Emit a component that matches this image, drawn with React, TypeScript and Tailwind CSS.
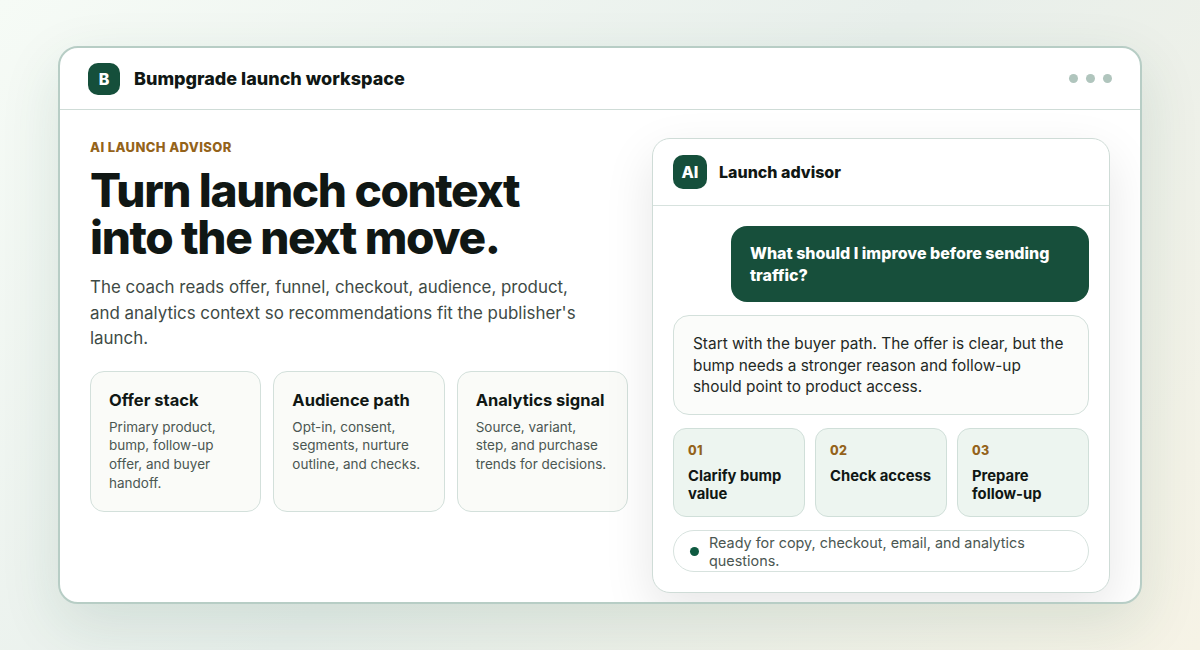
const features = [
  { title: "Offer stack", text: "Primary product, bump, follow-up offer, and buyer handoff." },
  { title: "Audience path", text: "Opt-in, consent, segments, nurture outline, and checks." },
  { title: "Analytics signal", text: "Source, variant, step, and purchase trends for decisions." },
];

const steps = [
  { num: "01", title: "Clarify bump value" },
  { num: "02", title: "Check access" },
  { num: "03", title: "Prepare follow-up" },
];

const App = () => {
  return (
    <div className="h-[650px] w-full overflow-hidden bg-[linear-gradient(135deg,#f6fbf6_0%,#e8efeb_50%,#f6f3e6_100%)] px-[58px] pt-[46px] font-['Inter',sans-serif] text-[#101714]">
      <div className="flex h-[558px] w-[1084px] flex-col overflow-hidden rounded-[20px] border-2 border-[#b7cdc5] bg-white shadow-[0_20px_60px_rgba(23,79,59,0.12)]">
        <header className="flex h-[62px] shrink-0 items-center justify-between border-b border-[#cfdcd7] px-7">
          <div className="flex items-center gap-[14px]">
            <div className="flex h-8 w-8 items-center justify-center rounded-[10px] bg-[#154f3b] text-[16px] font-extrabold text-white">B</div>
            <h2 className="text-[18px] font-extrabold">Bumpgrade launch workspace</h2>
          </div>
          <div className="flex gap-2">
            <span className="h-[9px] w-[9px] rounded-full bg-[#b0c5bd]"></span>
            <span className="h-[9px] w-[9px] rounded-full bg-[#b0c5bd]"></span>
            <span className="h-[9px] w-[9px] rounded-full bg-[#b0c5bd]"></span>
          </div>
        </header>

        <main className="flex gap-6 pl-[30px] pr-[30px] pt-7">
          <section className="w-[538px] shrink-0">
            <p className="text-[13px] font-extrabold uppercase leading-[18px] tracking-[0.03em] text-[#94631a]">AI launch advisor</p>
            <h1 className="mt-[11px] w-[520px] text-[46px] font-extrabold leading-[46.5px] tracking-[-0.03em]">Turn launch context into the next move.</h1>
            <p className="mt-[15px] w-[500px] text-[16.9px] leading-[25.5px] text-[#3e4a45]">
              The coach reads offer, funnel, checkout, audience, product, and analytics context so recommendations fit the publisher's launch.
            </p>
            <div className="mt-[19.5px] grid grid-cols-3 gap-3">
              {features.map((f) => (
                <div key={f.title} className="h-[141px] rounded-[14px] border border-[#d3e0db] bg-[#fafbf8] px-[18px] pt-[16px]">
                  <h3 className="text-[16.5px] font-bold leading-[24px]">{f.title}</h3>
                  <p className="mt-[5.5px] text-[13.5px] leading-[18.9px] text-[#4b5752]">{f.text}</p>
                </div>
              ))}
            </div>
          </section>

          <section className="h-[455px] w-[458px] shrink-0 overflow-hidden rounded-[18px] border border-[#cfdcd7] bg-white shadow-[0_18px_50px_rgba(16,23,20,0.1)]">
            <div className="flex h-[67px] items-center gap-3 border-b border-[#d7e2de] px-5">
              <div className="flex h-[34px] w-[34px] items-center justify-center rounded-[10px] bg-[#154f3b] text-[16px] font-extrabold text-white">AI</div>
              <h3 className="text-[16px] font-extrabold">Launch advisor</h3>
            </div>
            <div className="flex flex-col gap-[13px] px-5 pt-5">
              <div className="ml-auto w-[358px] rounded-[16px] bg-[#174f3b] px-[19px] py-4 text-[16px] font-extrabold leading-[22px] text-white">
                What should I improve before sending traffic?
              </div>
              <div className="rounded-[16px] border border-[#d3e0db] bg-[#fbfcfa] px-[19px] pb-[16.5px] pt-[17px] text-[15.4px] leading-[21.5px] text-[#1f2925]">
                Start with the buyer path. The offer is clear, but the bump needs a stronger reason and follow-up should point to product access.
              </div>
              <div className="grid grid-cols-3 gap-[10px]">
                {steps.map((s) => (
                  <div key={s.num} className="h-[89px] rounded-[13px] border border-[#d0dfd9] bg-[#edf5f0] px-[14px] pt-[13px]">
                    <p className="text-[12.5px] font-extrabold leading-[18px] tracking-[0.02em] text-[#94631a]">{s.num}</p>
                    <p className="mt-[7px] text-[14.8px] font-bold leading-[18px]">{s.title}</p>
                  </div>
                ))}
              </div>
              <div className="flex h-[42px] items-center gap-[10px] rounded-full border border-[#d7e2de] bg-white pl-4 pr-5 text-[14.4px] leading-[18px] text-[#4b5752]">
                <span className="h-[9px] w-[9px] shrink-0 rounded-full bg-[#0f5a41]"></span>
                <span className="pt-[2px]">Ready for copy, checkout, email, and analytics questions.</span>
              </div>
            </div>
          </section>
        </main>
      </div>
    </div>
  );
};

export default App;
